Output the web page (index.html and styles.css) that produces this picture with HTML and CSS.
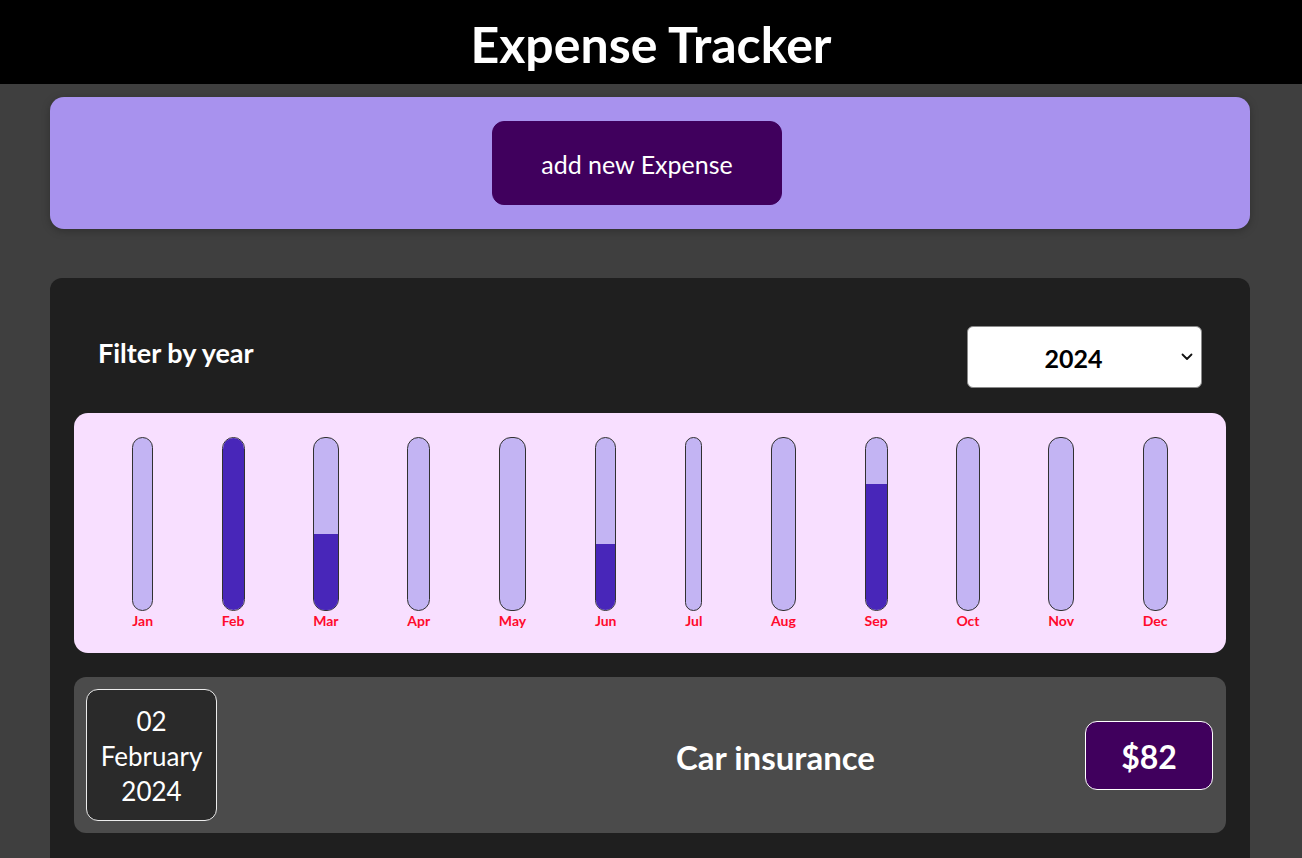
FILE: index.html
```html
<!DOCTYPE html>
<html lang="en">
<head>
<meta charset="utf-8">
<title>Expense Tracker</title>
<link rel="stylesheet" href="styles.css">
</head>
<body>
<header class="app-header">
  <h1 class="app-title">Expense Tracker</h1>
</header>
<main class="app-main">
  <section class="new-expense">
    <button class="new-expense-btn" type="button">add new Expense</button>
  </section>

  <section class="expenses">
    <div class="filter">
      <label class="filter-label" for="year">Filter by year</label>
      <div class="select-wrap">
        <select id="year" class="filter-select">
          <option>2024</option>
          <option>2023</option>
          <option>2022</option>
        </select>
        <svg class="select-chevron" width="12" height="8" viewBox="0 0 12 8" aria-hidden="true">
          <path d="M1.5 1.5 L6 6 L10.5 1.5" fill="none" stroke="#111" stroke-width="1.8" stroke-linecap="round" stroke-linejoin="round"/>
        </svg>
      </div>
    </div>

    <div class="chart">
      <div class="chart-bar"><div class="bar-inner"><div class="bar-fill" style="height:0%"></div></div><span class="bar-label">Jan</span></div>
      <div class="chart-bar"><div class="bar-inner"><div class="bar-fill" style="height:100%"></div></div><span class="bar-label">Feb</span></div>
      <div class="chart-bar"><div class="bar-inner"><div class="bar-fill" style="height:44%"></div></div><span class="bar-label">Mar</span></div>
      <div class="chart-bar"><div class="bar-inner"><div class="bar-fill" style="height:0%"></div></div><span class="bar-label">Apr</span></div>
      <div class="chart-bar"><div class="bar-inner"><div class="bar-fill" style="height:0%"></div></div><span class="bar-label">May</span></div>
      <div class="chart-bar"><div class="bar-inner"><div class="bar-fill" style="height:38.5%"></div></div><span class="bar-label">Jun</span></div>
      <div class="chart-bar"><div class="bar-inner"><div class="bar-fill" style="height:0%"></div></div><span class="bar-label">Jul</span></div>
      <div class="chart-bar"><div class="bar-inner"><div class="bar-fill" style="height:0%"></div></div><span class="bar-label">Aug</span></div>
      <div class="chart-bar"><div class="bar-inner"><div class="bar-fill" style="height:73.5%"></div></div><span class="bar-label">Sep</span></div>
      <div class="chart-bar"><div class="bar-inner"><div class="bar-fill" style="height:0%"></div></div><span class="bar-label">Oct</span></div>
      <div class="chart-bar"><div class="bar-inner"><div class="bar-fill" style="height:0%"></div></div><span class="bar-label">Nov</span></div>
      <div class="chart-bar"><div class="bar-inner"><div class="bar-fill" style="height:0%"></div></div><span class="bar-label">Dec</span></div>
    </div>

    <ul class="expense-list">
      <li class="expense-item">
        <div class="expense-date">
          <span>02</span>
          <span>February</span>
          <span>2024</span>
        </div>
        <div class="expense-desc">
          <h2 class="expense-title">Car insurance</h2>
          <div class="expense-price">$82</div>
        </div>
      </li>
      <li class="expense-item">
        <div class="expense-date">
          <span>14</span>
          <span>March</span>
          <span>2024</span>
        </div>
        <div class="expense-desc">
          <h2 class="expense-title">Groceries</h2>
          <div class="expense-price">$36</div>
        </div>
      </li>
    </ul>
  </section>
</main>
</body>
</html>
```

FILE: styles.css
```css
* {
  box-sizing: border-box;
}

html, body {
  margin: 0;
  padding: 0;
}

body {
  background: #3f3f3f;
  font-family: "Lato", "Source Sans Pro", "Liberation Sans", sans-serif;
  color: #fff;
}

.app-header {
  background: #000;
  height: 84px;
  display: flex;
  align-items: center;
  justify-content: center;
}

.app-title {
  margin: 0;
  font-size: 50px;
  font-weight: 700;
  line-height: 1;
  color: #fff;
  padding-top: 4px;
}

.app-main {
  width: 1200px;
  margin: 13px auto 0;
  display: flex;
  flex-direction: column;
  gap: 49px;
  position: relative;
  left: -1px;
}

.new-expense {
  background: #a892ee;
  border-radius: 14px;
  padding: 24px;
  display: flex;
  justify-content: center;
  box-shadow: 0 2px 8px rgba(0, 0, 0, 0.25);
}

.new-expense-btn {
  font-family: inherit;
  font-size: 25px;
  line-height: 36px;
  padding: 24px 48px;
  width: 290px;
  height: 84px;
  margin-right: 26px;
  background: #40005d;
  color: #fff;
  border: 1px solid #40005d;
  border-radius: 12px;
  cursor: pointer;
}

.expenses {
  background: #1f1f1f;
  border-radius: 12px;
  padding: 24px;
}

.filter {
  display: flex;
  align-items: center;
  justify-content: space-between;
  padding: 0 24px;
  margin: 24px 0 25px;
}

.filter-label {
  font-size: 27px;
  font-weight: 700;
  color: #fff;
  margin-top: -10px;
}

.select-wrap {
  position: relative;
  width: 235px;
  height: 62px;
}

.filter-select {
  appearance: none;
  -webkit-appearance: none;
  width: 100%;
  height: 100%;
  background: #fff;
  border: 1px solid #8a8a8a;
  border-radius: 6px;
  font-family: inherit;
  font-size: 25px;
  font-weight: 700;
  color: #000;
  text-align: center;
  text-align-last: center;
  padding: 2px 22px 0 0;
}

.select-chevron {
  position: absolute;
  right: 9px;
  top: 27px;
  pointer-events: none;
}

.chart {
  background: #f8dfff;
  border-radius: 14px;
  padding: 24px;
  height: 240px;
  display: flex;
  justify-content: space-around;
}

.chart-bar {
  height: 100%;
  display: flex;
  flex-direction: column;
  align-items: stretch;
}

.bar-inner {
  flex: 1;
  border: 1px solid #313131;
  border-radius: 12px;
  background: #c3b4f3;
  overflow: hidden;
  display: flex;
  flex-direction: column;
  justify-content: flex-end;
}

.bar-fill {
  background: #4826b9;
  width: 100%;
}

.bar-label {
  font-size: 14px;
  font-weight: 700;
  color: #ff0a2c;
  line-height: 16px;
  padding-top: 2px;
  text-align: center;
}

.expense-list {
  list-style: none;
  margin: 24px 0 0;
  padding: 0;
  display: flex;
  flex-direction: column;
  gap: 25px;
}

.expense-item {
  background: #4b4b4b;
  border-radius: 12px;
  padding: 12px 13px 12px 12px;
  display: flex;
  align-items: center;
  gap: 12px;
}

.expense-date {
  width: 131px;
  height: 132px;
  flex-shrink: 0;
  background: #2a2a2a;
  border: 1px solid #ececec;
  border-radius: 12px;
  display: flex;
  flex-direction: column;
  align-items: center;
  justify-content: center;
  font-size: 26px;
  line-height: 35px;
  padding-top: 3px;
  color: #fff;
}

.expense-desc {
  flex: 1;
  display: flex;
  align-items: center;
  justify-content: flex-end;
  gap: 210px;
}

.expense-title {
  margin: 0;
  font-size: 33px;
  font-weight: 700;
  color: #fff;
  padding-top: 3px;
}

.expense-price {
  background: #40005d;
  border: 1px solid #fff;
  border-radius: 12px;
  width: 128px;
  height: 69px;
  display: flex;
  align-items: center;
  justify-content: center;
  font-size: 32px;
  font-weight: 700;
  color: #fff;
  padding-top: 3px;
}
```
